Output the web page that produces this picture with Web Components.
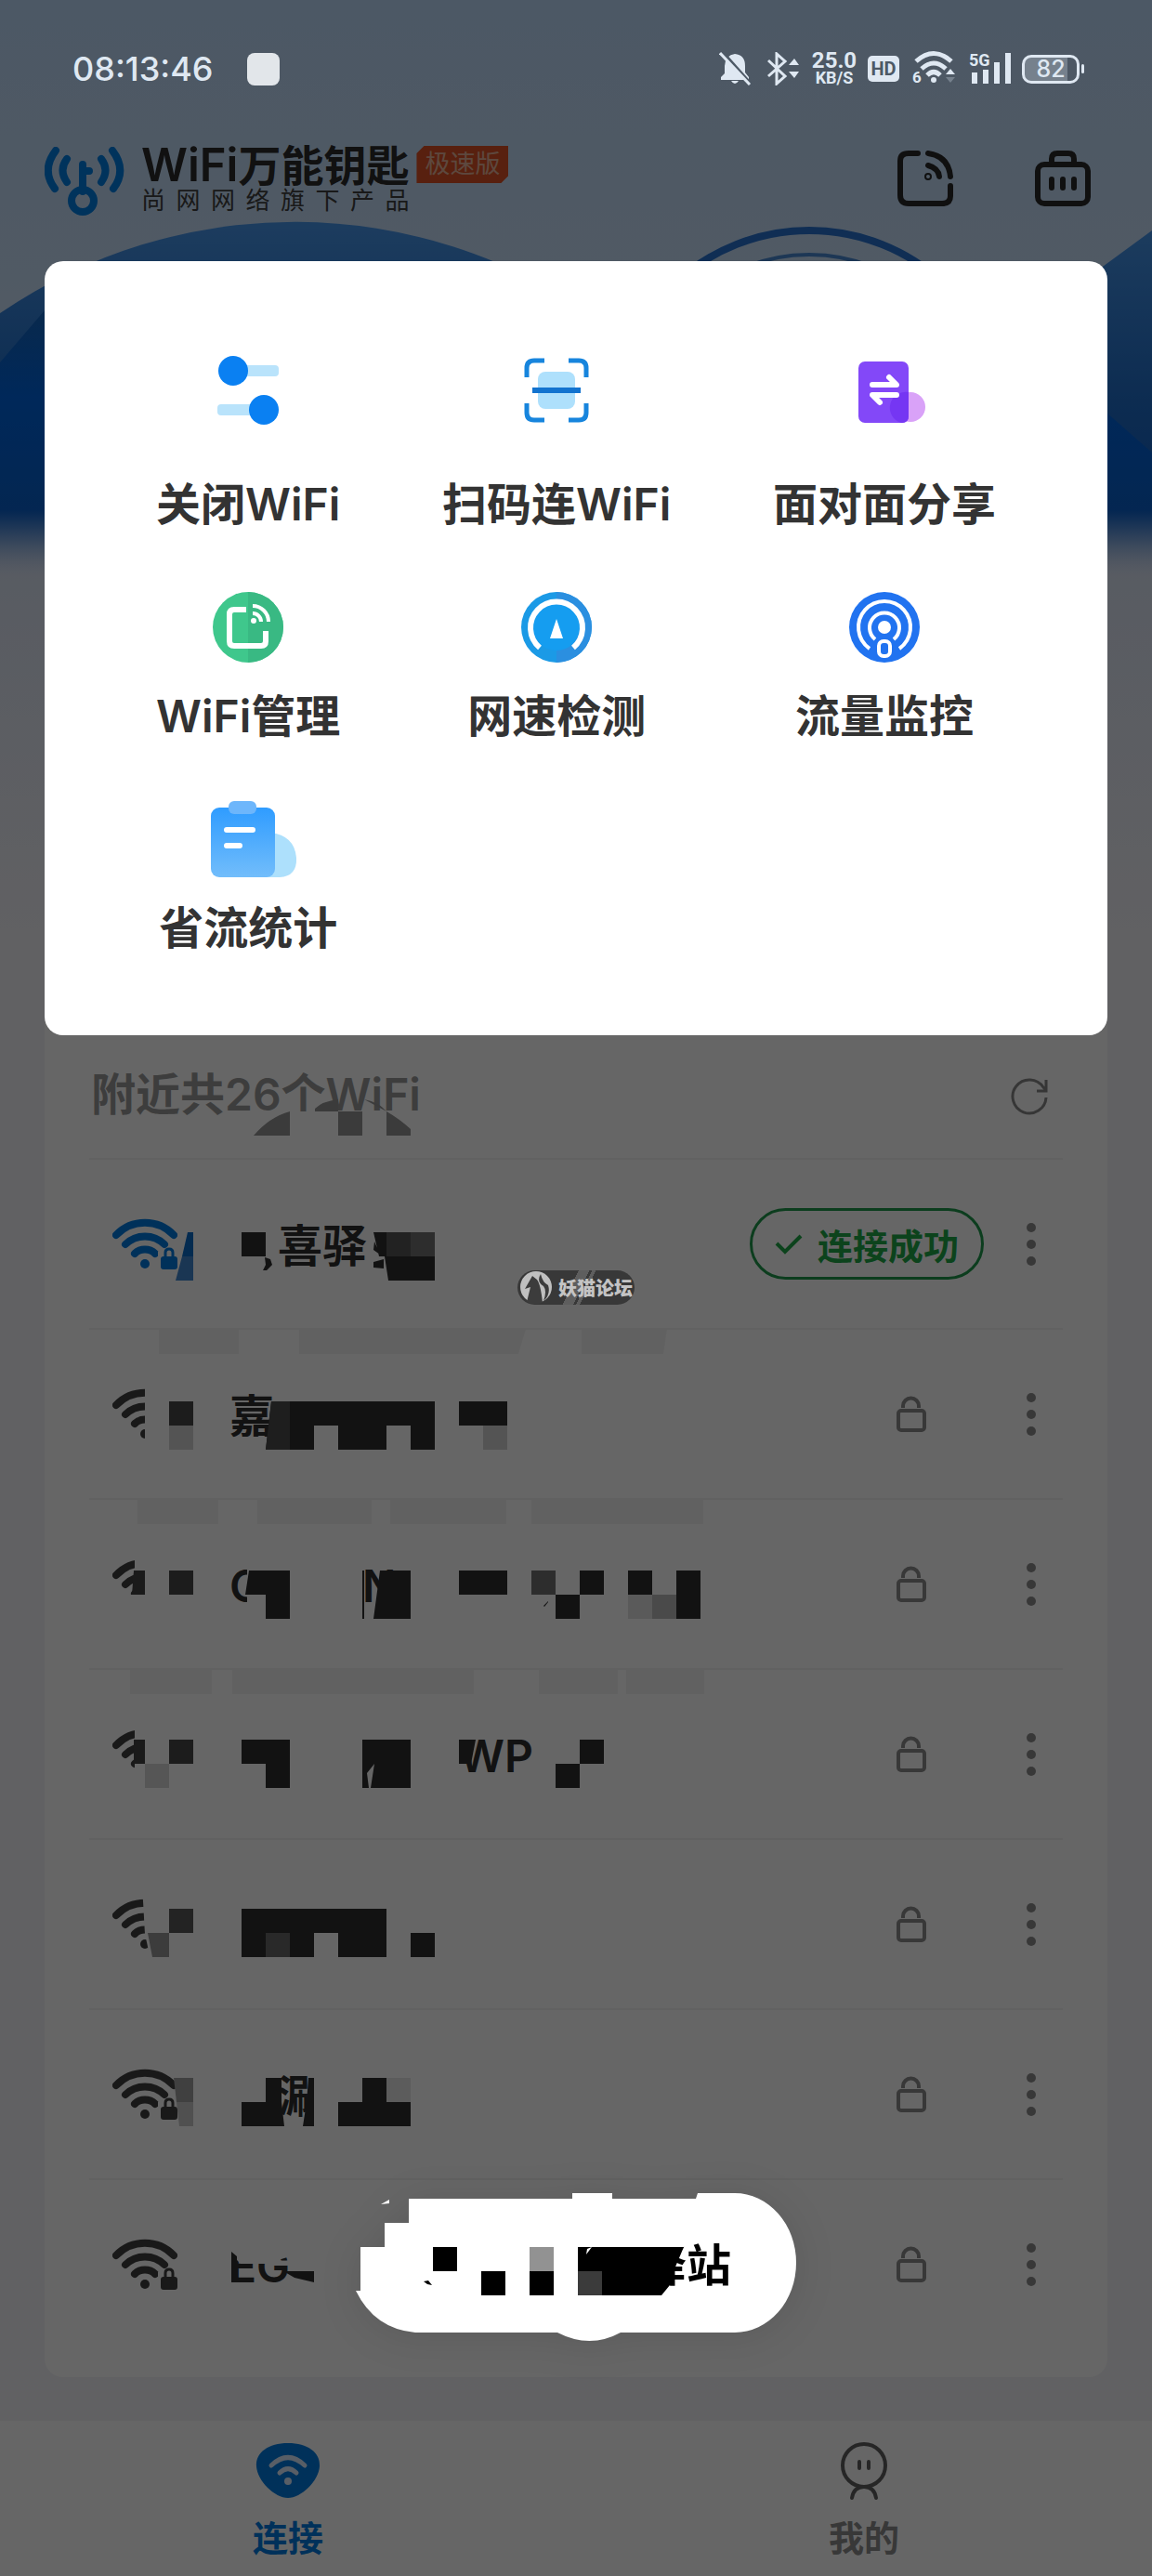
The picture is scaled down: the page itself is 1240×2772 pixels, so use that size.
<!DOCTYPE html>
<html lang="zh-CN">
<head>
<meta charset="UTF-8">
<meta name="viewport" content="width=device-width, initial-scale=1">
<title>WiFi万能钥匙</title>
<style>
body {
    margin: 0;
    background: #f2f2f7;
    font-family: Inter, "Noto Sans CJK SC", sans-serif;
    color: #333;
}
</style>
</head>
<body>
<app-screen>
    <status-bar slot="status" time="08:13:46" battery="82"></status-bar>
    <app-header slot="header"></app-header>

    <wifi-list heading="附近共26个WiFi">
        <wifi-row mask="0" connected><span style="grid-column: 5">喜驿</span></wifi-row>
        <wifi-row mask="1"><span style="grid-column: 1">嘉</span></wifi-row>
        <wifi-row mask="2"><span style="grid-column: 1">C</span><span style="grid-column: 12">N</span></wifi-row>
        <wifi-row mask="3"><span style="grid-column: 20">WP</span></wifi-row>
        <wifi-row mask="4"></wifi-row>
        <wifi-row mask="5"><span style="grid-column: 5">涮</span></wifi-row>
        <wifi-row mask="6"><span style="grid-column: 1">EG</span></wifi-row>
    </wifi-list>

    <tab-bar slot="tabs"></tab-bar>

    <tool-menu slot="overlay">
        <tool-item icon="toggle" tall>关闭WiFi</tool-item>
        <tool-item icon="scan" tall>扫码连WiFi</tool-item>
        <tool-item icon="share" tall>面对面分享</tool-item>
        <tool-item icon="manage">WiFi管理</tool-item>
        <tool-item icon="speed">网速检测</tool-item>
        <tool-item icon="flow">流量监控</tool-item>
        <tool-item icon="stats">省流统计</tool-item>
    </tool-menu>
    <forum-mark slot="overlay">妖猫论坛</forum-mark>
    <toast-pill slot="overlay">驿站</toast-pill>
</app-screen>

<script>
const define = (name, html) => {
    customElements.define(name, class extends HTMLElement {
        constructor() {
            super();
            this.attachShadow({ mode: "open" });
        }

        connectedCallback() {
            this.shadowRoot.innerHTML = typeof html === "function" ? html(this) : html;
        }
    });
};

// Tool icons are drawn around their own centre
const TOOL_ICONS = {
    toggle: `
        <rect x="-18" y="-27" width="51" height="12" rx="4" fill="#b9e3fb"/>
        <rect x="-33" y="15" width="51" height="12" rx="4" fill="#b9e3fb"/>
        <circle cx="-16" cy="-21" r="16" fill="#0a80f2"/>
        <circle cx="17" cy="21" r="16" fill="#0a80f2"/>`,
    scan: `
        <rect x="-20" y="-20" width="40" height="40" rx="8" fill="#aee0fc"/>
        <path d="M-26 0H26" stroke="#1273cf" stroke-width="6"/>
        <path d="M-32-14V-24q0-8 8-8H-13M13-32H24q8 0 8 8V-14M32 14V24q0 8-8 8H13M-13 32H-24q-8 0-8-8V14" fill="none" stroke="#1785dd" stroke-width="5"/>`,
    share: `
        <circle cx="28" cy="18" r="16" fill="#d9a2f8"/>
        <rect x="-28" y="-31" width="54" height="66" rx="7" fill="#8348f8"/>
        <path d="M26 2V28q0 7-7 7H18a17 17 0 0 1 8-33z" fill="#7536f3"/>
        <path d="M-13-6H13L5-14M13 5H-13L-5 13" fill="none" stroke="#fff" stroke-width="6" stroke-linecap="round" stroke-linejoin="round"/>`,
    manage: `
        <circle r="38" fill="#3fc78c"/><path d="M0-38a38 38 0 0 1 0 76z" fill="#39b983"/>
        <path d="M-2-19H-15q-5 0-5 5V15q0 5 5 5H14q5 0 5-5V4" fill="none" stroke="#fff" stroke-width="6"/>
        <circle cx="6" cy="-7" r="3" fill="#fff"/>
        <path d="M5-15A9 9 0 0 1 14-6M5-23A17 17 0 0 1 22-6" fill="none" stroke="#fff" stroke-width="4"/>`,
    speed: `
        <circle r="38" fill="#1b9ae6"/><path d="M0-38a38 38 0 0 1 0 76z" fill="#2b8fe0"/><circle r="25" fill="#159df0"/>
        <path d="M-18 22A28 28 0 1 1 18 22" fill="none" stroke="#fff" stroke-width="6"/>
        <path d="M0-9L7 12H-7z" fill="#fff"/>`,
    flow: `
        <circle r="38" fill="#2173f0"/>
        <g fill="none" stroke="#fff" stroke-width="4">
            <path d="M-16 23A28 28 0 1 1 16 23M-10 13A16 16 0 1 1 10 13"/>
            <rect x="-6" y="15" width="12" height="16" rx="5"/>
        </g>
        <circle r="7" fill="#fff"/>`,
    stats: `
        <defs><linearGradient id="g" x2="0" y2="1"><stop stop-color="#2f9cff"/><stop offset="1" stop-color="#72bdfb"/></linearGradient></defs>
        <path d="M24-7Q50-4 52 20Q53 40 34 41H20z" fill="#ade0fc"/>
        <rect x="-40" y="-34" width="69" height="75" rx="9" fill="url(#g)"/>
        <rect x="-21" y="-41" width="30" height="14" rx="6" fill="#6db6fb"/>
        <path d="M-23-10H5M-23 7H-9" stroke="#fff" stroke-width="6" stroke-linecap="round"/>`
};

// Mosaic that hides the network names: [fill, path] in row coordinates
const MASKS = [
    [
        ["#0a6cc8", "M106 80h6v26h-12z"], ["#4288d0", "M100 106h12v26H93z"],
        ["#2e2e2e", "M164 80h26v26h-26z"], ["#2e2e2e", "M189 107l6 2 2 6-6 6h-4l3-6z"],
        ["#2e2e2e", "M306 80h40v26h-34zM307 90l6 14-7-5zM306 112l11-3v10l-11-1z"],
        ["#555", "M320 80h26v26h-26z"], ["#707070", "M346 80h26v26h-26z"],
        ["#2e2e2e", "M318 106h54v26h-50z"]
    ],
    [
        ["#f3f3f3", "M75 1h86v27H75zM226 1h244l-8 27H226zM530 1h92l-4 27h-88z"],
        ["#fff", "M60 60h52v75H60z"],
        ["#464646", "M86 79h26v26H86z"], ["#d2d2d2", "M86 105h26v26H86z"],
        ["#2e2e2e", "M196 79h176v52h-26v-26h-26v26h-52v-26h-26v26h-52zM398 79h52v26h-52z"],
        ["#4b4b4b", "M196 79h20v52h-26z"], ["#d2d2d2", "M424 105h26v26h-26z"]
    ],
    [
        ["#f3f3f3", "M52 1h87v27H52zM181 1h123v27H181zM324 1h125v27H324zM476 1h185v27H476z"],
        ["#fff", "M49 50h63v90H49zM24 104h60v40H24zM170 60h30v80h-30z"],
        ["#424242", "M48 78h12v26H46z"], ["#464646", "M86 78h26v26H86z"],
        ["#2e2e2e", "M172 78h44v52h-26v-26h-22zM313 78h33v52h-40zM294 78h2v52h-2zM398 78h52v26h-52zM528 78h26v26h-26zM502 104h26v26h-26zM580 78h26v26h-26zM632 78h26v52h-26zM489 116l5-5v1l-4 5z"],
        ["#707070", "M476 78h26v26h-26z"], ["#e0e0e0", "M580 104h26v26h-26z"], ["#b8b8b8", "M606 104h26v26h-26z"]
    ],
    [
        ["#f3f3f3", "M44 1h88v27H44zM154 1h260v27H154zM484 1h85v27h-85zM578 1h84v27h-84z"],
        ["#fff", "M49 50h63v90H49z"],
        ["#424242", "M48 77h12v26H48z"], ["#464646", "M86 77h26v26H86z"], ["#d6d6d6", "M60 103h26v26H60z"],
        ["#2e2e2e", "M164 77h52v52h-26v-26h-26zM294 77h52v52h-43l4-26-8 10 2 16h-7zM398 77h18l-5 26h-13zM528 77h26v26h-26zM502 103h26v26h-26z"]
    ],
    [
        ["#fff", "M57 50h55v90H68l-8-37z"],
        ["#585858", "M86 76h26v26H86z"], ["#969696", "M63 102h23v26H68z"],
        ["#2e2e2e", "M164 76h156v52h-52v-26h-26v26h-78zM346 102h26v26h-26z"],
        ["#666", "M190 102h26v26h-26z"]
    ],
    [
        ["#a0a0a0", "M91 75h21v26H94z"], ["#c8c8c8", "M94 101h18v26h-15z"],
        ["#2e2e2e", "M190 75h17v26l3 26h-46v-26h26zM236 75h6v52h-12l4-26zM294 75h26v26h26v26h-78v-26h26z"],
        ["#fff", "M242 70h8v62h-8z"], ["#e6e6e6", "M320 75h26v26h-26z"]
    ],
    [
        ["#fff", "M150 60h80v20l-40 12h-27l-10-10z"],
        ["#2e2e2e", "M153 79l6 5v28h-6zM209 100h33v12l-21-5z"]
    ]
];

define("app-screen", `
<style>
:host {
    position: relative;
    display: flex;
    flex-direction: column;
    min-height: 100vh;
    overflow: hidden;
}
.hero {
    position: absolute;
    inset: 0 0 auto;
    width: 100%;
    height: 1000px;
}
main {
    position: relative;
    flex: 1;
    padding: 852px 48px 46px;
}
.scrim {
    position: absolute;
    inset: 0;
    background: rgba(0, 0, 0, 0.6);
}
</style>
<svg class="hero" viewBox="0 0 1240 1000" preserveAspectRatio="none" aria-hidden="true">
    <defs>
        <linearGradient id="sky" x2="0" y2="1"><stop stop-color="#bedcfc"/><stop offset=".3" stop-color="#c9e0fa"/><stop offset=".6" stop-color="#dbe4f6"/><stop offset="1" stop-color="#f2f2f7"/></linearGradient>
        <linearGradient id="deep" gradientUnits="userSpaceOnUse" y1="320" x2="0" y2="625"><stop stop-color="#1966bc"/><stop offset=".35" stop-color="#0065e0"/><stop offset=".75" stop-color="#0a60cc"/><stop offset="1" stop-color="#dbe4f6" stop-opacity="0"/></linearGradient>
        <linearGradient id="mid" gradientUnits="userSpaceOnUse" y1="240" x2="0" y2="620"><stop stop-color="#4897ec"/><stop offset=".5" stop-color="#216fcb"/><stop offset=".8" stop-color="#155fc0"/><stop offset="1" stop-color="#dbe4f6" stop-opacity="0"/></linearGradient>
    </defs>
    <rect width="1240" height="1000" fill="url(#sky)"/>
    <path d="M0 337A561 561 0 0 1 640 341V622H0z" fill="url(#mid)"/>
    <path d="M1150 314L1240 248V622H1100z" fill="url(#mid)"/>
    <path d="M0 390L60 320H1180L1190 443L1240 487V625H0z" fill="url(#deep)"/>
    <circle cx="871" cy="460" r="212" fill="none" stroke="#2874d2" stroke-width="8"/>
    <circle cx="871" cy="460" r="186" fill="none" stroke="#4a8bd4" stroke-width="4"/>
</svg>
<slot name="header"></slot>
<main><slot></slot></main>
<slot name="tabs"></slot>
<div class="scrim"></div>
<slot name="status"></slot>
<slot name="overlay"></slot>`);

define("status-bar", (el) => `
<style>
:host {
    position: absolute;
    inset: 0 0 auto;
    display: flex;
    align-items: center;
    justify-content: space-between;
    height: 148px;
    padding: 0 73px 0 78px;
    color: #dfe8f2;
}
div { display: flex; align-items: center; }
.left { gap: 36px; font-size: 36px; font-weight: 500; }
.chip { width: 35px; height: 35px; border-radius: 8px; background: #e2e6ea; }
.right { gap: 10px; }
.speed { flex-direction: column; width: 52px; font: 700 24px/20px Roboto, sans-serif; }
.speed small { font-size: 18px; line-height: 18px; }
.hd {
    justify-content: center;
    width: 34px; height: 28px;
    border-radius: 5px;
    background: #dfe8f2;
    color: #4d5966;
    font: 700 20px Roboto, sans-serif;
}
.battery {
    box-sizing: border-box;
    justify-content: center;
    width: 62px; height: 31px;
    border: 3px solid;
    border-radius: 10px;
    background: linear-gradient(90deg, #76818d 82%, transparent 0);
    font-size: 25px;
    font-weight: 500;
}
.tip { width: 3px; height: 10px; margin-left: -8px; background: #dfe8f2; border-radius: 2px; }
</style>
<div class="left"><span>${el.getAttribute("time")}</span><span class="chip"></span></div>
<div class="right">
    <svg width="42" height="36" viewBox="0 0 42 36" fill="#dfe8f2" aria-hidden="true">
        <path d="M17 2q11 1 11 13v7l4 5v3H2v-3l4-4V15Q7 3 17 2zM13 31h8q-4 6-8 0z"/>
        <path d="M4 0l32 36" stroke="#4d5966" stroke-width="3"/><path d="M1 1l32 34" stroke="#dfe8f2" stroke-width="3"/>
    </svg>
    <svg width="36" height="36" viewBox="2 0 36 36" fill="none" stroke="#dfe8f2" stroke-width="3" aria-hidden="true">
        <path d="M3 9l18 17-9 8V2l9 8L3 26"/><path d="M25 14h11l-5-7zM25 21h11l-5 7z" fill="#dfe8f2" stroke="none"/>
    </svg>
    <div class="speed"><span>25.0</span><small>KB/S</small></div>
    <div class="hd">HD</div>
    <svg width="52" height="46" viewBox="-4 -4 52 46" aria-hidden="true">
        <g fill="none" stroke="#dfe8f2" stroke-width="5"><path d="M4 11Q23-6 42 11M10 19q13-12 26 0M16 26q7-7 14 0"/></g>
        <circle cx="23" cy="31" r="3" fill="#dfe8f2"/><path d="M36 25h10l-5-6z" fill="#dfe8f2"/><path d="M36 28h10l-5 6z" fill="#76818d"/>
        <text x="0" y="34" font-size="17" font-weight="700" font-family="Roboto" fill="#dfe8f2">6</text>
    </svg>
    <svg width="50" height="48" viewBox="-3 -6 50 48" fill="#dfe8f2" aria-hidden="true">
        <path d="M3 22h6v12H3zM15 19h6v15h-6zM27 11h6v23h-6zM39 1h6v33h-6z"/>
        <text x="0" y="15" font-size="18" font-weight="700" font-family="Roboto">5G</text>
    </svg>
    <div class="battery">${el.getAttribute("battery")}</div><span class="tip"></span>
</div>`);

define("app-header", `
<style>
:host {
    position: relative;
    display: flex;
    align-items: flex-start;
    padding: 154px 66px 0 48px;
    height: 78px;
}
.logo { margin: 4px 18px 0 0; flex: none; }
.title { font-size: 46px; font-weight: 700; line-height: 48px; color: #2b2b2b; white-space: nowrap; }
.title b { font-size: 49px; font-weight: 600; }
.sub { font-size: 26px; line-height: 28px; color: #404040; text-align-last: justify; }
.tag {
    margin: 3px auto 0 8px;
    padding: 0 9px;
    font-size: 27px;
    line-height: 40px;
    color: #e8b49c;
    background: #dc5226;
    clip-path: polygon(8px 0, 100% 0, 100% 32px, calc(100% - 8px) 100%, 0 100%, 0 8px);
}
button { padding: 0; border: 0; background: none; margin: 8px 0 0 88px; height: 60px; }
</style>
<svg class="logo" width="86" height="74" viewBox="0 0 86 74" fill="none" stroke="#0080e6" stroke-width="8" stroke-linecap="round" aria-hidden="true">
    <path d="M12 4Q-4 25 11 45M24 13Q15 25 24 38M73 4Q89 25 74 45M61 13Q70 25 61 38"/>
    <path d="M41 19V48M41 26h7"/><circle cx="41" cy="58" r="12"/>
</svg>
<div>
    <div class="title"><b>WiFi</b>万能钥匙</div>
    <div class="sub">尚网网络旗下产品</div>
</div>
<span class="tag">极速版</span>
<button aria-label="共享">
    <svg width="60" height="60" viewBox="0 0 60 60" fill="none" stroke="#2a2a2a" stroke-width="6" stroke-linecap="round">
        <path d="M22 3H12Q3 3 3 11V48Q3 57 12 57H48Q57 57 57 49V38M33 3Q55 6 57 28M33 16Q44 19 45 28"/><circle cx="33" cy="28" r="1"/>
    </svg>
</button>
<button aria-label="工具箱">
    <svg width="60" height="60" viewBox="0 0 60 60" fill="none" stroke="#2a2a2a" stroke-width="6" stroke-linecap="round">
        <rect x="3" y="15" width="54" height="42" rx="7"/><path d="M18 14V9q0-6 6-6h12q6 0 6 6v5M18 31v9M30 31v9M42 31v9"/>
    </svg>
</button>`);

define("wifi-list", (el) => `
<style>
:host {
    display: block;
    padding: 30px 48px 31px;
    background: #fff;
    border-radius: 20px;
}
header { position: relative; display: flex; align-items: center; justify-content: space-between; height: 132px; padding: 0 16px 0 2px; }
h2 { margin: 0; padding-bottom: 4px; font-size: 48px; font-weight: 600; line-height: 60px; color: #999; }
button { padding: 0; border: 0; background: none; height: 40px; }
.mask { position: absolute; left: 0; bottom: 0; }
</style>
<header>
    <h2>${el.getAttribute("heading")}</h2>
    <svg class="mask" width="400" height="132" viewBox="0 0 400 132" aria-hidden="true">
        <path fill="#fff" d="M217 82h77v30h-77z"/>
        <path fill="#949494" d="M177 108q17-20 39-26v26zM243 79q8-8 25-10v13h-25zM268 82h26v26h-26zM296 69q16 3 24 13 14 8 26 19v7h-26V82z"/>
    </svg>
    <button aria-label="刷新">
        <svg width="40" height="40" viewBox="0 0 40 40" fill="none" stroke="#888" stroke-width="3">
            <path d="M38 21A18 18 0 1 1 35 10L38 13M38 2V14H28"/>
        </svg>
    </button>
</header>
<slot></slot>`);

define("wifi-row", (el) => {
    const connected = el.hasAttribute("connected");
    const shapes = MASKS[el.getAttribute("mask")].map(([fill, d]) => `<path fill="${fill}" d="${d}"/>`).join("");
    return `
<style>
:host {
    position: relative;
    display: flex;
    align-items: center;
    box-sizing: border-box;
    height: 183px;
    padding: 0 10px 0 25px;
    border-top: 2px solid #f2f2f2;
}
.signal { flex: none; color: ${connected ? "#007ce0" : "#404040"}; }
.name {
    flex: 1;
    display: grid;
    grid-template-columns: repeat(30, 13px);
    margin-left: 56px;
    padding-top: 4px;
    font-size: 48px;
    font-weight: 600;
    line-height: 72px;
    color: #2e2e2e;
    white-space: nowrap;
}
::slotted(span) { grid-row: 1; width: 0; }
.mask { position: absolute; left: 0; top: -2px; }
.action { display: flex; justify-content: center; width: 156px; }
.action.on { width: auto; }
.ok {
    display: flex;
    align-items: center;
    gap: 16px;
    box-sizing: border-box;
    height: 77px;
    padding: 0 24px;
    border: 3px solid #209a4c;
    border-radius: 39px;
    background: none;
    font: 600 38px "Noto Sans CJK SC", sans-serif;
    color: #20a848;
    white-space: nowrap;
}
.more { padding: 0; border: 0; background: none; width: 48px; height: 48px; margin-left: 27px; }
.more svg, .action svg { display: block; margin: auto; }
</style>
<svg class="signal" width="70" height="56" viewBox="0 0 70 56" fill="none" stroke="currentColor" stroke-width="8" stroke-linecap="round" aria-hidden="true">
    <path d="M4 18A43 43 0 0 1 66 18M14 28A30 30 0 0 1 56 28M24 38A16 16 0 0 1 46 38"/>
    <circle cx="35" cy="49" r="5" fill="currentColor" stroke="none"/>
    <path d="M49 36h24v20H49z" fill="#fff" stroke="none"/>
    <rect x="52" y="41" width="18" height="14" rx="3" fill="currentColor" stroke="none"/>
    <path d="M57 41v-4q0-4 4-4t4 4v4" stroke-width="3"/>
</svg>
<div class="name"><slot></slot></div>
<svg class="mask" width="700" height="183" viewBox="0 0 700 183" aria-hidden="true">${shapes}</svg>
<div class="action ${connected ? "on" : ""}">${connected ? `
    <button class="ok">
        <svg width="30" height="24" viewBox="0 0 30 24" fill="none" stroke="currentColor" stroke-width="4"><path d="M2 11l9 9L28 3"/></svg>
        <span>连接成功</span>
    </button>` : `
    <svg width="32" height="40" viewBox="0 0 32 40" fill="none" stroke="#8c8c8c" stroke-width="4" role="img" aria-label="加密">
        <rect x="2" y="16" width="28" height="21" rx="3"/><path d="M7 13V11a8 8 0 0 1 17 0v2"/>
    </svg>`}
</div>
<button class="more" aria-label="更多">
    <svg width="10" height="48" viewBox="0 0 10 48" fill="#8c8c8c"><circle cx="5" cy="6" r="5"/><circle cx="5" cy="24" r="5"/><circle cx="5" cy="42" r="5"/></svg>
</button>`;
});

define("tab-bar", `
<style>
:host { position: relative; display: block; background: #fff; }
nav { display: grid; grid-template-columns: 1fr 1fr; }
a {
    display: flex;
    flex-direction: column;
    align-items: center;
    gap: 16px;
    padding: 22px 0 17px;
    font-size: 38px;
    font-weight: 600;
    line-height: 48px;
    color: #8c8c8c;
    text-decoration: none;
}
a.active { color: #007ce0; }
</style>
<nav>
    <a class="active" href="#connect">
        <svg width="70" height="64" viewBox="0 0 70 64" aria-hidden="true">
            <path d="M35 2C56 2 70 12 69 27C68 43 49 61 35 61S2 43 1 27C0 12 14 2 35 2z" fill="#007ce0"/>
            <path d="M17 26Q35 9 53 26M26 34q9-9 18 0" fill="none" stroke="#dcecff" stroke-width="5" stroke-linecap="round"/>
            <circle cx="35" cy="43" r="4" fill="#dcecff"/>
        </svg>
        <span>连接</span>
    </a>
    <a href="#mine">
        <svg width="54" height="64" viewBox="0 0 54 64" fill="none" stroke="#606060" stroke-width="4" stroke-linecap="round" aria-hidden="true">
            <circle cx="27" cy="26" r="23"/><path d="M22 22v7M32 22v7M14 61q2-12 13-12t13 12"/>
        </svg>
        <span>我的</span>
    </a>
</nav>`);

define("tool-menu", `
<style>
:host {
    position: absolute;
    top: 281px;
    left: 48px;
    right: 48px;
    display: grid;
    grid-template-columns: repeat(3, auto);
    justify-content: space-between;
    row-gap: 58px;
    padding: 74px 120px 79px;
    background: #fff;
    border-radius: 20px;
}
</style>
<slot></slot>`);

define("tool-item", (el) => `
<style>
:host { display: block; }
button {
    display: flex;
    flex-direction: column;
    align-items: center;
    gap: 22px;
    width: 100%;
    padding: 0;
    border: 0;
    background: none;
    color: #333;
    font: inherit;
    font-size: 48px;
    font-weight: 600;
    line-height: 72px;
    white-space: nowrap;
}
svg { overflow: visible; height: 76px; }
:host([tall]) svg { height: 130px; }
</style>
<button>
    <svg width="76" viewBox="-38 -38 76 76" aria-hidden="true">${TOOL_ICONS[el.getAttribute("icon")]}</svg>
    <span><slot></slot></span>
</button>`);

define("forum-mark", `
<style>
:host {
    position: absolute;
    top: 1367px;
    left: 0;
    right: 0;
    display: flex;
    align-items: center;
    gap: 6px;
    box-sizing: border-box;
    width: 126px;
    height: 37px;
    margin: auto;
    border-radius: 19px;
    overflow: hidden;
    background: linear-gradient(115deg, #383838 46%, #5e5e5e 0 54%, #383838 0 56%, #5e5e5e 0 59%, #383838 0);
    color: #c4c4c4;
    font: 900 20px/37px "Noto Sans CJK SC", sans-serif;
    white-space: nowrap;
}
svg { flex: none; }
</style>
<svg width="38" height="37" viewBox="0 0 38 37" aria-hidden="true">
    <circle cx="20" cy="18" r="17" fill="#c0c0c0"/>
    <path d="M10 34L14 18L8 20L16 6L21 10Q25 15 27 35Q18 38 10 34zM25 4Q20 12 28 17Q32 22 28 33Q36 26 33 16Q27 13 25 4z" fill="#3c3c3c"/>
</svg>
<span><slot></slot></span>`);

define("toast-pill", `
<style>
:host {
    position: absolute;
    bottom: 252px;
    left: 0;
    right: 0;
    display: flex;
    justify-content: flex-end;
    box-sizing: border-box;
    width: 474px;
    height: 160px;
    margin: auto;
    padding: 42px 70px 0 0;
    color: #000;
    font-size: 48px;
    font-weight: 600;
    line-height: 72px;
    filter: drop-shadow(0 4px 20px rgba(0, 0, 0, 0.1));
}
svg { position: absolute; left: 0; top: 0; }
span { position: relative; }
</style>
<svg width="474" height="160" viewBox="0 0 474 160" aria-hidden="true">
    <path fill="#fff" d="M57 6H233V0H276V6H366L368 0H408A66 75 0 0 1 408 150H285Q252 168 217 150H64Q20 146 0 105H5V58H31V32H57zM27 12l9-5v4z"/>
</svg>
<span><slot></slot></span>
<svg width="474" height="160" viewBox="0 0 474 160" aria-hidden="true">
    <path d="M83 58h26v26H83zM135 84h26v26h-26zM187 84h26v26h-26zM239 58H353L342 84V99H338L329 110H239zM73 95l5-1 4 5-5-1z"/>
    <path fill="#fff" d="M248 66l1-6 5-2z"/>
    <path fill="#929292" d="M187 58h26v26h-26z"/><path fill="#3b3b3b" d="M239 84h26v26h-26z"/>
    <path fill="#fff" d="M300 40h53v18h-53zM300 110h42v12h-42z"/>
</svg>`);
</script>
</body>
</html>
